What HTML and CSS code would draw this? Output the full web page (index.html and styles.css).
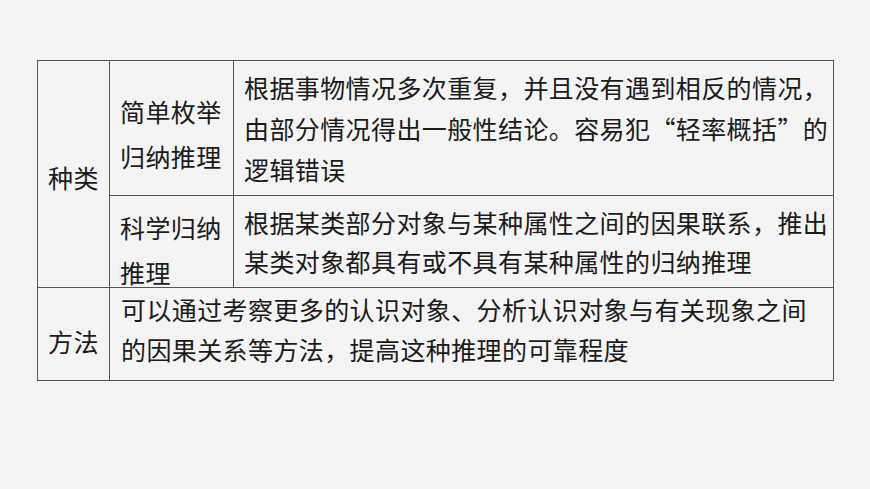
FILE: index.html
```html
<!DOCTYPE html>
<html lang="zh-CN">
<head>
<meta charset="utf-8">
<title>归纳推理</title>
<link rel="stylesheet" href="styles.css">
</head>
<body>
<main class="page">
  <table class="grid">
    <colgroup>
      <col class="c1">
      <col class="c2">
      <col class="c3">
    </colgroup>
    <tbody>
      <tr class="r1">
        <td class="head kind" rowspan="2">种类</td>
        <td class="sub"><div class="sub-text">简单枚举<br>归纳推理</div></td>
        <td class="desc">根据事物情况多次重复，并且没有遇到相反的情况，<br>由部分情况得出一般性结论。容易犯“轻率概括”的<br>逻辑错误</td>
      </tr>
      <tr class="r2">
        <td class="sub"><div class="sub-text sub-text2">科学归纳<br>推理</div></td>
        <td class="desc desc2">根据某类部分对象与某种属性之间的因果联系，推出<br>某类对象都具有或不具有某种属性的归纳推理</td>
      </tr>
      <tr class="r3">
        <td class="head method">方法</td>
        <td class="wide" colspan="2">可以通过考察更多的认识对象、分析认识对象与有关现象之间<br>的因果关系等方法，提高这种推理的可靠程度</td>
      </tr>
    </tbody>
  </table>
</main>
</body>
</html>
```

FILE: styles.css
```css
html, body {
  margin: 0;
  padding: 0;
  background: #f4f4f4;
}

.page {
  width: 870px;
  height: 489px;
  padding: 60px 0 0 37px;
  box-sizing: border-box;
}

.grid {
  border-collapse: collapse;
  table-layout: fixed;
  width: 796px;
  border: 1px solid #222;
  font-family: "Noto Sans CJK SC", sans-serif;
  font-size: 25px;
  letter-spacing: 0.4px;
  color: #1b1b1b;
}

.c1 { width: 72px; }
.c2 { width: 124px; }
.c3 { width: 600px; }

.grid td {
  border: 1px solid #555;
  padding: 0;
  white-space: nowrap;
  vertical-align: middle;
  line-height: 41px;
}

.r1 { height: 135px; }
.r2 { height: 92px; }
.r3 { height: 93px; }

.grid td.head {
  text-align: center;
}

.grid td.kind {
  padding-top: 6px;
}

.grid td.method {
  padding-top: 14px;
}

.grid td.sub {
  line-height: 45px;
  padding-left: 10px;
}

.sub-text {
  margin: 6px 0 -6px;
}

.sub-text2 {
  margin: 8px 0 -8px;
}

.grid td.desc {
  padding-left: 10px;
}

.grid td.desc2 {
  line-height: 39px;
}

.grid td.wide {
  vertical-align: top;
  line-height: 40px;
  padding: 1px 0 0 11px;
}
```
